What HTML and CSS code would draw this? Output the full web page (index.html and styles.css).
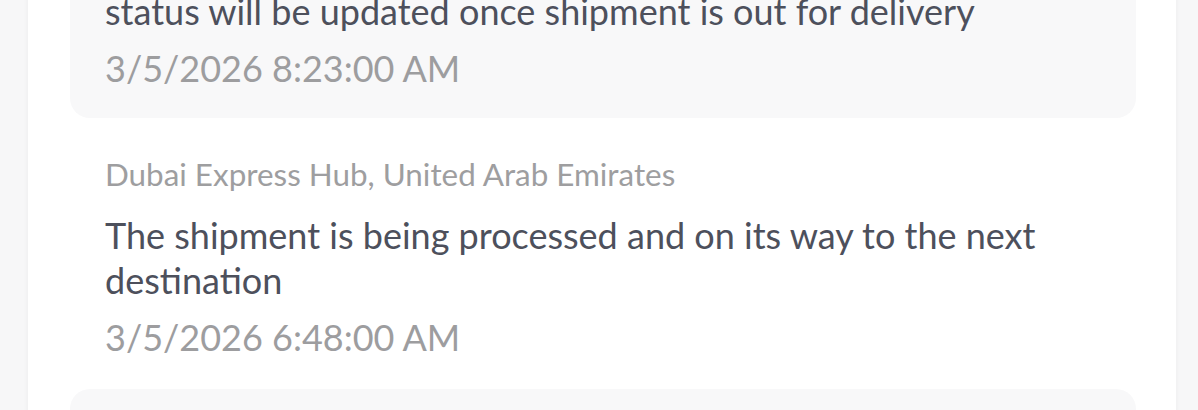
FILE: index.html
```html
<!DOCTYPE html>
<html lang="en">
<head>
<meta charset="utf-8">
<title>Tracking history</title>
<link rel="stylesheet" href="styles.css">
</head>
<body>
<div class="page">
  <div class="card">
    <ul class="timeline">
      <li class="event event--active">
        <div class="event-location">Dubai Delivery Center, United Arab Emirates</div>
        <div class="event-message">The shipment has arrived at the local delivery facility and its status will be updated once shipment is out for delivery</div>
        <div class="event-time">3/5/2026 8:23:00 AM</div>
      </li>
      <li class="event">
        <div class="event-location">Dubai Express Hub, United Arab Emirates</div>
        <div class="event-message">The shipment is being processed and on its way to the next destination</div>
        <div class="event-time">3/5/2026 6:48:00 AM</div>
      </li>
      <li class="event event--active">
        <div class="event-location">Dubai Express Hub, United Arab Emirates</div>
        <div class="event-message">The shipment has been received at the hub</div>
        <div class="event-time">3/5/2026 4:10:00 AM</div>
      </li>
    </ul>
  </div>
</div>
</body>
</html>
```

FILE: styles.css
```css
* { box-sizing: border-box; }
html, body {
  margin: 0;
  padding: 0;
  background: #f7f7f8;
  font-family: "Lato", "Liberation Sans", sans-serif;
  overflow: hidden;
}
.page {
  padding: 0 22px 0 28px;
}
.card {
  background: #ffffff;
  box-shadow: 0 0 6px rgba(0, 0, 0, 0.05);
  padding: 0 40px 0 42px;
  margin-top: -149px;
}
.timeline {
  list-style: none;
  margin: 0;
  padding: 0;
  display: flex;
  flex-direction: column;
  gap: 2px;
}
.event {
  padding: 34px 35px 27px;
  border-radius: 20px;
}
.event--active {
  background: #f8f8f9;
}
.event-location {
  font-size: 31.4px;
  line-height: 40px;
  color: #9e9ea0;
}
.event-message {
  margin-top: 19px;
  font-size: 36px;
  line-height: 45px;
  color: #4d505c;
}
.event-time {
  margin-top: 12px;
  font-size: 36px;
  line-height: 45px;
  color: #9d9d9f;
}
```
